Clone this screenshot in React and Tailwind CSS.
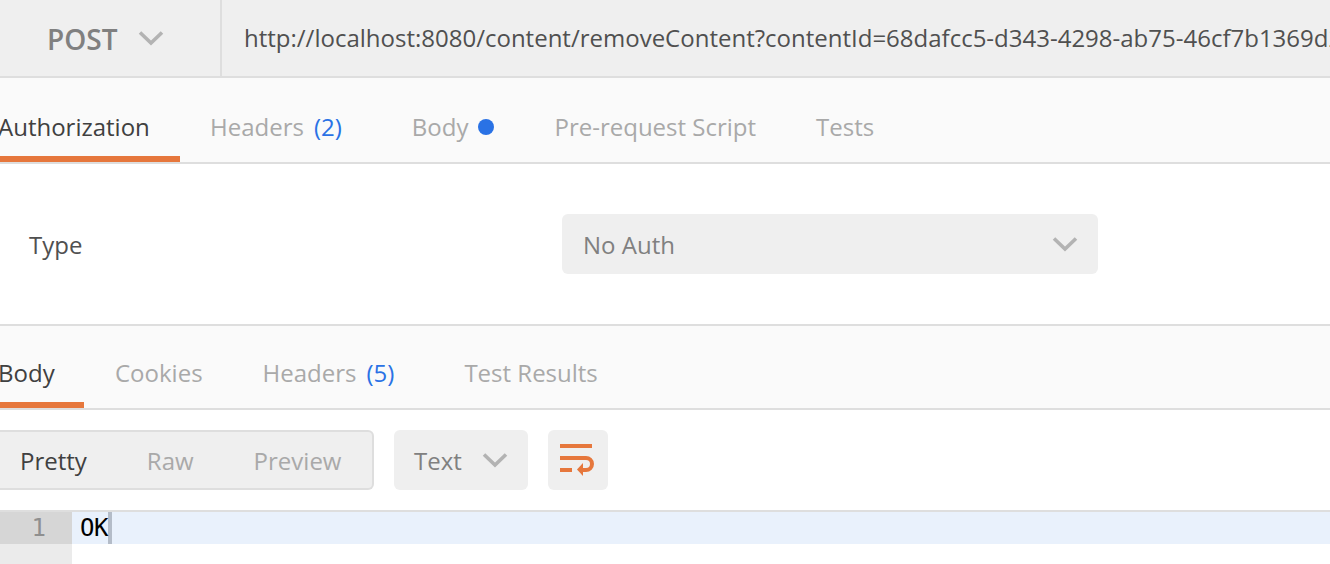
const F = "font-['Open_Sans',sans-serif]";

function Chevron({ className }) {
  return (
    <svg className={className} width="26" height="16" viewBox="0 0 26 16" fill="none">
      <path d="M2 2.5 L13 13 L24 2.5" stroke="#b3b3b3" strokeWidth="3.6" />
    </svg>
  );
}

function Tab({ children, active, className = "" }) {
  return (
    <div className={`flex items-center h-full text-[24px] ${active ? "text-[#404040]" : "text-[#a9a9a9]"} ${className}`}>
      {children}
    </div>
  );
}

export default function App() {
  return (
    <div className={`${F} w-[1330px] h-[564px] overflow-hidden bg-white flex flex-col`}>
      <div className="h-[78px] shrink-0 bg-[#efefef] border-b-2 border-[#dedede] flex">
        <div className="w-[222px] shrink-0 border-r-2 border-[#dedede] flex items-center pl-[47px] gap-[21px]">
          <span className="text-[28px] pt-[2px] font-semibold text-[#808080]">POST</span>
          <Chevron />
        </div>
        <div className="flex items-center pl-[22px] text-[24px] text-[#505050] whitespace-nowrap">
          http://localhost:8080/content/removeContent?contentId=68dafcc5-d343-4298-ab75-46cf7b1369d2
        </div>
      </div>

      <div className="h-[86px] shrink-0 bg-[#fafafa] border-b-2 border-[#dedede] flex">
        <Tab active className="w-[180px] border-b-[6px] border-[#e6773c] pt-[20px]"><span className="-ml-[2px]">Authorization</span></Tab>
        <Tab className="ml-[30px] gap-[10px] pt-[14px]">Headers <span className="text-[#2a72e5]">(2)</span></Tab>
        <Tab className="ml-[70px] gap-[10px] pt-[14px]">Body <span className="w-4 h-4 rounded-full bg-[#2a72e5]" /></Tab>
        <Tab className="ml-[60px] pt-[14px]">Pre-request Script</Tab>
        <Tab className="ml-[60px] pt-[14px]">Tests</Tab>
      </div>

      <div className="h-[160px] shrink-0 flex items-center pl-[29px]">
        <span className="w-[533px] text-[24px] pt-[2px] text-[#505050]">Type</span>
        <div className="w-[536px] h-[60px] bg-[#efefef] rounded-md flex items-center justify-between pl-[21px] pr-[20px]">
          <span className="text-[24px] pt-[2px] text-[#808080]">No Auth</span>
          <Chevron />
        </div>
      </div>

      <div className="h-[86px] shrink-0 bg-[#fafafa] border-y-2 border-[#dedede] flex">
        <Tab active className="w-[84px] border-b-[6px] border-[#e6773c] pt-[18px]"><span className="-ml-[2px]">Body</span></Tab>
        <Tab className="ml-[31px] pt-[12px]">Cookies</Tab>
        <Tab className="ml-[60px] gap-[10px] pt-[12px]">Headers <span className="text-[#2a72e5]">(5)</span></Tab>
        <Tab className="ml-[70px] pt-[12px]">Test Results</Tab>
      </div>

      <div className="h-[102px] shrink-0 flex items-center gap-5 border-b-2 border-[#dedede]">
        <div className="w-[374px] h-[60px] bg-[#efefef] border-2 border-l-0 border-[#dedede] rounded-r-md flex items-center text-[24px] pl-5 pt-[2px]">
          <span className="text-[#404040]">Pretty</span>
          <span className="ml-[60px] text-[#a9a9a9]">Raw</span>
          <span className="ml-[60px] text-[#a9a9a9]">Preview</span>
        </div>
        <div className="w-[134px] h-[60px] bg-[#efefef] rounded-md flex items-center justify-between pl-5 pr-[20px]">
          <span className="text-[24px] pt-[2px] text-[#808080]">Text</span>
          <Chevron />
        </div>
        <div className="w-[60px] h-[60px] bg-[#efefef] rounded-md flex items-center pl-3">
          <svg width="36" height="34" viewBox="0 0 36 34" fill="none" stroke="#e6773c" strokeWidth="4">
            <path d="M0 3 H32" />
            <path d="M0 15 H26 A6 6 0 0 1 26 27 H21" />
            <path d="M0 27 H12" />
            <path d="M23 20 L17 26.5 L23 33 Z" fill="#e6773c" stroke="none" />
          </svg>
        </div>
      </div>

      <div className="flex flex-1">
        <div className="w-[72px] shrink-0 bg-[#ebebeb]">
          <div className="h-8 bg-[#d6d6d6] text-[24px] leading-8 text-[#8f8f8f] text-right pr-[26px] font-['DejaVu_Sans_Mono',monospace]">1</div>
        </div>
        <div className="flex-1">
          <div className="h-8 bg-[#e9f1fc] flex items-center pl-[8px] text-[24px] text-black font-['DejaVu_Sans_Mono',monospace]">
            <span className="leading-8 border-r-4 border-[#b4bcc8] h-8 w-[32px] -tracking-[0.5px]">OK</span>
          </div>
        </div>
      </div>
    </div>
  );
}
